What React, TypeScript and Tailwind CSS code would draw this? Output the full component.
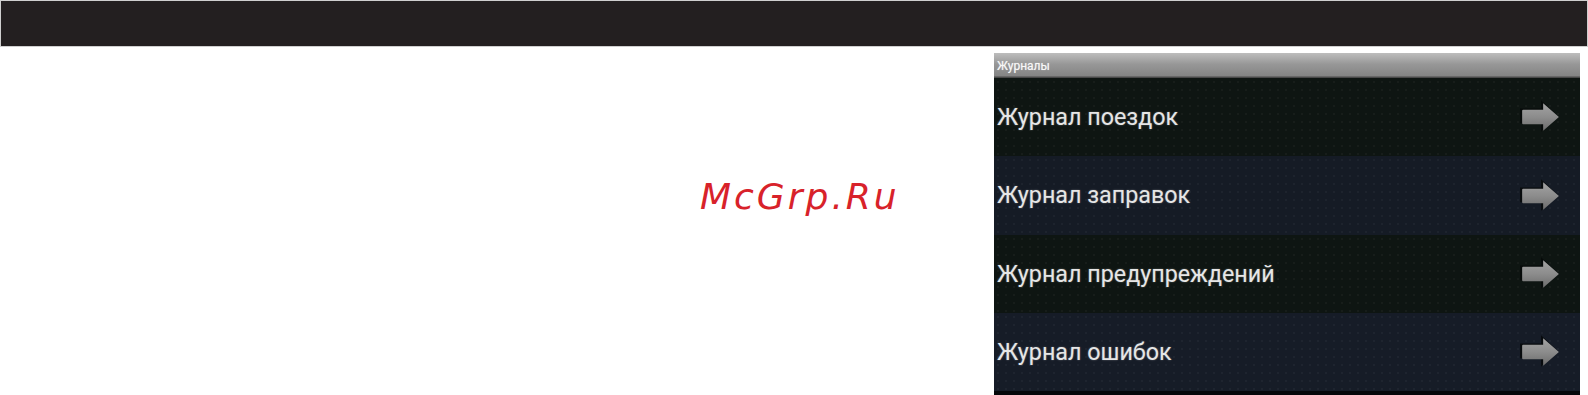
import React from "react";

const rows = [
  { label: "Журнал поездок", bg: "bg-[#0e1512]", h: "h-[78px]" },
  { label: "Журнал заправок", bg: "bg-[#151b25]", h: "h-[79px]" },
  { label: "Журнал предупреждений", bg: "bg-[#0e1512]", h: "h-[78px]" },
  { label: "Журнал ошибок", bg: "bg-[#161c27]", h: "h-[78px]" },
];

function Arrow({ id }: { id: string }) {
  return (
    <svg width="42" height="36" viewBox="0 0 40 34" className="shrink-0">
      <defs>
        <linearGradient id={`g${id}`} x1="0" y1="0" x2="0" y2="1">
          <stop offset="0" stopColor="#a3a3a3" />
          <stop offset="0.5" stopColor="#8c8c8c" />
          <stop offset="1" stopColor="#6c6c6c" />
        </linearGradient>
      </defs>
      <path d="M2 10 H22 V2 L38 17 L22 32 V24 H2 Z" fill="#050807" opacity="0.8" transform="translate(-1,-1)" />
      <path d="M4 10 Q3 10 3 11 V23 Q3 24 4 24 H23 V30 L38 17 L23 4 V10 Z" fill={`url(#g${id})`} />
    </svg>
  );
}

export default function App() {
  return (
    <div className="w-[1588px] h-[395px] bg-white overflow-hidden relative">
      <div className="h-[47px] w-[1588px] border border-[#cfcfcf] bg-[#231f20]" />
      <div className="absolute left-[700px] top-[179px] text-[#d8222a] italic text-[36px] leading-none tracking-[3px]" style={{ fontFamily: '"DejaVu Sans", sans-serif' }}>
        McGrp.Ru
      </div>
      <div className="ml-[994px] mt-[6px] w-[586px] flex flex-col" style={{ fontFamily: 'Roboto, "Liberation Sans", sans-serif' }}>
        <div className="h-[25px] bg-[linear-gradient(#bdbdbd,#979797_45%,#858585_90%,#3a3a3a)] flex items-center pl-[3px] text-[12px] text-[#f7f7f7] [text-shadow:0_0_1px_rgba(255,255,255,0.6)]">
          Журналы
        </div>
        {rows.map((r, i) => (
          <div key={i} className={`${r.h} ${r.bg} flex items-center justify-between pl-[3px] pr-[19px] bg-[radial-gradient(rgba(255,255,255,0.035)_1px,transparent_1.5px)] bg-[length:8px_8px]`}>
            <span className="text-[23.3px] text-[#e6e6e6] [text-shadow:0_0_2px_rgba(255,255,255,0.35)]">{r.label}</span>
            <Arrow id={String(i)} />
          </div>
        ))}
        <div className="h-[4px] bg-[#05070a]" />
      </div>
    </div>
  );
}
